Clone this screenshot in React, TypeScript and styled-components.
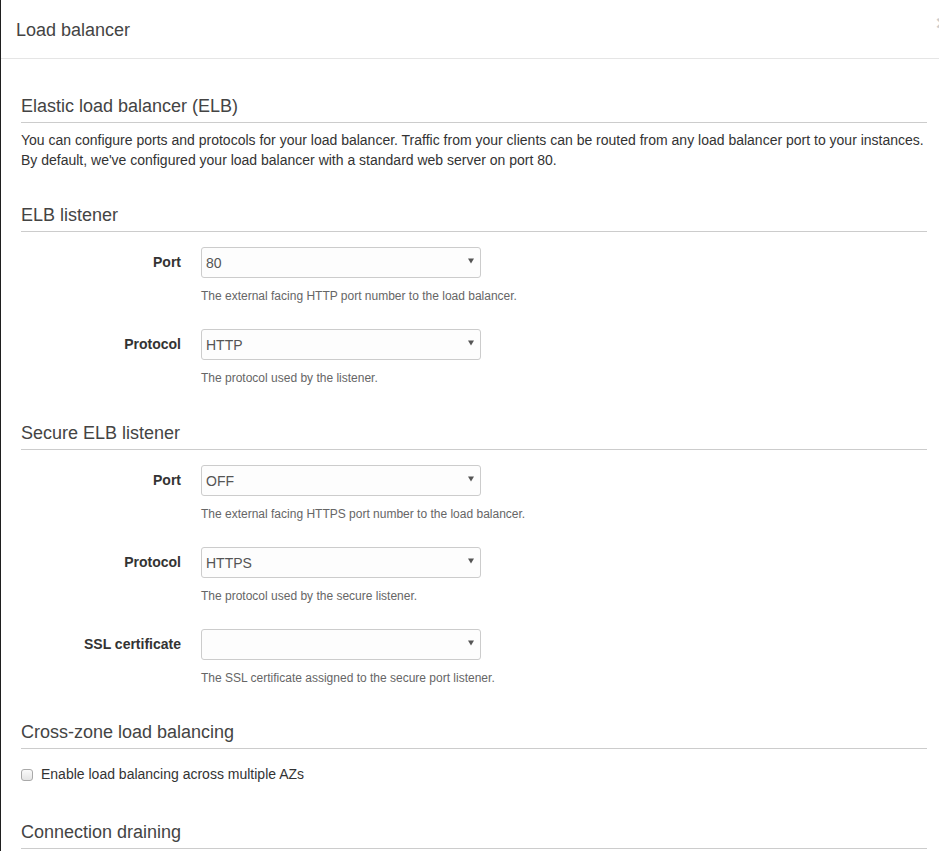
import React from "react";
import styled, { createGlobalStyle } from "styled-components";

const Global = createGlobalStyle`
  html, body {
    margin: 0;
    padding: 0;
    overflow: hidden;
    background: #ffffff;
  }
  body {
    font-family: "Liberation Sans", Arial, Helvetica, sans-serif;
    font-size: 14px;
    line-height: 20px;
    color: #333;
  }
  * { box-sizing: border-box; }
`;

const Modal = styled.div`
  width: 947px;
  min-height: 1200px;
  background: #fff;
  border-left: 1px solid #1f1f1f;
`;

const Header = styled.div`
  display: flex;
  align-items: flex-start;
  justify-content: space-between;
  padding: 16px 15px 14px 15px;
  border-bottom: 1px solid #e5e5e5;
`;

const Title = styled.h4`
  margin: 0;
  font-size: 18px;
  font-weight: 400;
  line-height: 28px;
  color: #444;
`;

const Close = styled.button`
  margin-right: -16px;
  margin-top: -4px;
  padding: 0;
  border: 0;
  background: transparent;
  font-family: "Liberation Sans", Arial, sans-serif;
  font-size: 21px;
  font-weight: 700;
  line-height: 1;
  color: #000;
  opacity: 0.2;
  cursor: pointer;
`;

const Body = styled.div`
  padding: 20px 20px 20px 20px;
`;

const Section = styled.section<{ $top?: number }>`
  margin-top: ${(p) => (p.$top ?? 35)}px;
`;

const SectionTitle = styled.h3`
  margin: 0;
  font-size: 18px;
  font-weight: 400;
  line-height: 20px;
  color: #444;
  padding-bottom: 6px;
  border-bottom: 1px solid #ccc;
`;

const Intro = styled.p`
  margin: 7px 0 0 0;
  font-size: 14px;
  line-height: 20px;
  color: #333;
`;

const Fields = styled.div`
  display: flex;
  flex-direction: column;
  gap: 24px;
  margin-top: 15px;
`;

const FieldRow = styled.div`
  display: grid;
  grid-template-columns: 160px 280px;
  column-gap: 20px;
  align-items: center;
`;

const Label = styled.label`
  text-align: right;
  font-weight: 700;
  font-size: 14px;
  line-height: 20px;
  color: #333;
  margin-top: -1px;
`;

const SelectBox = styled.div`
  height: 31px;
  display: flex;
  align-items: center;
  justify-content: space-between;
  padding: 0 6px 0 4px;
  border: 1px solid #ccc;
  border-radius: 3px;
  background: #fdfdfd;
  font-size: 14px;
  color: #555;
`;

const Arrow = styled.svg`
  width: 6px;
  height: 6px;
  margin-top: -3px;
`;

const Help = styled.div`
  grid-column: 2;
  margin-top: 10px;
  font-size: 12px;
  line-height: 17px;
  color: #666;
  white-space: nowrap;
`;

const CheckRow = styled.label`
  display: flex;
  align-items: center;
  gap: 8px;
  margin-top: 15px;
  font-size: 14px;
  line-height: 20px;
  color: #333;
`;

const CheckBox = styled.span`
  width: 12px;
  height: 12px;
  margin-top: 1px;
  border: 1px solid #a9a9a9;
  border-radius: 3px;
  background: linear-gradient(#fafafa, #e4e4e4);
`;

type FieldProps = { label: string; value: string; help: string };

const Field = ({ label, value, help }: FieldProps) => (
  <FieldRow>
    <Label>{label}</Label>
    <SelectBox>
      <span>{value}</span>
      <Arrow viewBox="0 0 6 6">
        <path d="M0 0.5 H6 L3 5.5 Z" fill="#555" />
      </Arrow>
    </SelectBox>
    <Help>{help}</Help>
  </FieldRow>
);

export default function App() {
  return (
    <>
      <Global />
      <Modal>
        <Header>
          <Title>Load balancer</Title>
          <Close aria-label="Close">×</Close>
        </Header>
        <Body>
          <Section $top={17}>
            <SectionTitle>Elastic load balancer (ELB)</SectionTitle>
            <Intro>
              You can configure ports and protocols for your load balancer. Traffic from your clients can be routed from any load balancer port to your instances.
              <br />
              By default, we've configured your load balancer with a standard web server on port 80.
            </Intro>
          </Section>

          <Section>
            <SectionTitle>ELB listener</SectionTitle>
            <Fields>
              <Field label="Port" value="80" help="The external facing HTTP port number to the load balancer." />
              <Field label="Protocol" value="HTTP" help="The protocol used by the listener." />
            </Fields>
          </Section>

          <Section $top={36}>
            <SectionTitle>Secure ELB listener</SectionTitle>
            <Fields>
              <Field label="Port" value="OFF" help="The external facing HTTPS port number to the load balancer." />
              <Field label="Protocol" value="HTTPS" help="The protocol used by the secure listener." />
              <Field label="SSL certificate" value="" help="The SSL certificate assigned to the secure port listener." />
            </Fields>
          </Section>

          <Section>
            <SectionTitle>Cross-zone load balancing</SectionTitle>
            <CheckRow>
              <CheckBox />
              Enable load balancing across multiple AZs
            </CheckRow>
          </Section>

          <Section $top={38}>
            <SectionTitle>Connection draining</SectionTitle>
          </Section>
        </Body>
      </Modal>
    </>
  );
}
